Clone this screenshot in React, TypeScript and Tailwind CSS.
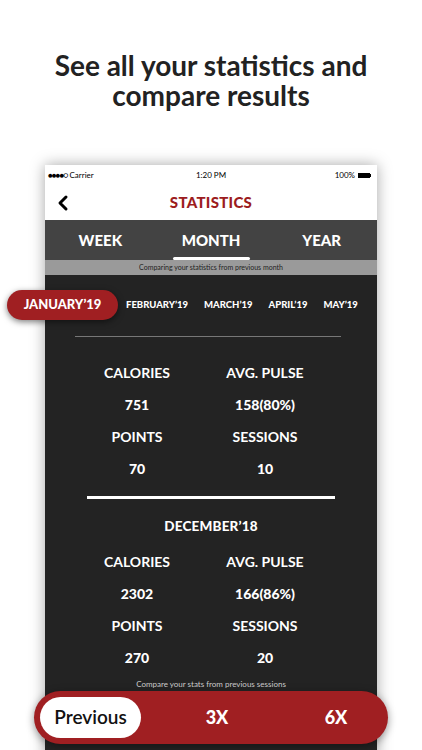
import { ChevronLeft } from 'lucide-react'

const months = ['FEBRUARY’19', 'MARCH’19', 'APRIL’19', 'MAY’19']

type Stat = { label: string; value: string }

function StatGrid({ stats }: { stats: Stat[][] }) {
  return (
    <div className="ml-[28px] grid w-[256px] grid-cols-2">
      {stats.map((row, i) => (
        <div key={i} className="contents">
          {row.map((s) => (
            <div key={s.label} className="flex flex-col items-center">
              <div className="flex h-[32px] items-center text-[14px] font-bold">{s.label}</div>
              <div className="flex h-[32px] items-center text-[14px] font-black">{s.value}</div>
            </div>
          ))}
        </div>
      ))}
    </div>
  )
}

export default function App() {
  return (
    <div className="relative h-[750px] w-full overflow-hidden bg-white font-['Lato',sans-serif]">
      <h1 className="pt-[50px] text-center text-[28px] leading-[30px] font-bold text-[#222]">
        <div>See all your statistics and</div>
        <div>compare results</div>
      </h1>

      <div className="mt-[55px] ml-[45px] h-[600px] w-[332px] bg-[#232323] shadow-[0_0_14px_rgba(0,0,0,0.35)]">
        {/* status bar */}
        <div className="flex h-[20px] items-center justify-between bg-white px-[3px] text-[8px] text-black">
          <span className="flex w-[80px] items-center gap-[2px]">
            <span className="tracking-[-1px]">●●●●○</span>
            <span>Carrier</span>
          </span>
          <span>1:20 PM</span>
          <span className="flex w-[80px] items-center justify-end gap-[3px] pr-[3px]">
            100%
            <span className="flex items-center">
              <span className="h-[5px] w-[12px] bg-black" />
              <span className="h-[3px] w-[1px] bg-black" />
            </span>
          </span>
        </div>

        {/* nav */}
        <div className="relative flex h-[35px] items-center justify-center bg-white">
          <ChevronLeft className="absolute left-[6px] top-[6px]" size={24} strokeWidth={3} color="#000" />
          <span className="text-[15px] font-black tracking-[0.3px] text-[#9c1c20]">STATISTICS</span>
        </div>

        {/* tabs */}
        <div className="flex h-[40px] bg-[#434343] text-[15px] font-black text-white">
          <div className="flex flex-1 items-center justify-center">WEEK</div>
          <div className="relative flex flex-1 items-center justify-center">
            MONTH
            <span className="absolute bottom-0 left-[17px] h-[3px] w-[77px] rounded-full bg-white" />
          </div>
          <div className="flex flex-1 items-center justify-center">YEAR</div>
        </div>
        <div className="flex h-[15px] items-center justify-center bg-[#9a9a9a] text-[7px] text-[#222]">
          Comparing your statistics from previous month
        </div>

        {/* months */}
        <div className="mt-[15px] flex h-[30px] items-center">
          <div className="-ml-[38px] flex h-[30px] w-[111px] shrink-0 items-center justify-center rounded-full bg-[#a01f22] text-[13px] font-black text-white shadow-[0_2px_6px_rgba(0,0,0,0.5)]">
            JANUARY’19
          </div>
          <div className="flex items-center gap-[16px] pl-[8px] text-[9.5px] font-black text-white">
            {months.map((m) => (
              <span key={m}>{m}</span>
            ))}
          </div>
        </div>

        <div className="mt-[16px] ml-[30px] h-px w-[266px] bg-[#777]" />

        <div className="mt-[19px] text-white">
          <StatGrid
            stats={[
              [
                { label: 'CALORIES', value: '751' },
                { label: 'AVG. PULSE', value: '158(80%)' },
              ],
              [
                { label: 'POINTS', value: '70' },
                { label: 'SESSIONS', value: '10' },
              ],
            ]}
          />
        </div>

        <div className="mt-[12px] ml-[42px] h-[3px] w-[248px] bg-white" />

        <div className="mt-[17px] text-center text-[13.5px] font-black tracking-[0.2px] text-white">DECEMBER’18</div>

        <div className="mt-[9px] text-white">
          <StatGrid
            stats={[
              [
                { label: 'CALORIES', value: '2302' },
                { label: 'AVG. PULSE', value: '166(86%)' },
              ],
              [
                { label: 'POINTS', value: '270' },
                { label: 'SESSIONS', value: '20' },
              ],
            ]}
          />
        </div>

        <div className="mt-[5px] text-center text-[8px] text-[#ccc]">Compare your stats from previous sessions</div>
      </div>

      {/* bottom switcher */}
      <div className="absolute top-[691px] left-[34px] flex h-[53px] w-[354px] items-center rounded-full bg-[#a01f22] px-[6px] shadow-[0_2px_8px_rgba(0,0,0,0.4)]">
        <div className="flex h-[41px] w-[101px] shrink-0 items-center justify-center rounded-full bg-white text-[19px] font-semibold text-[#111]">
          Previous
        </div>
        <div className="flex items-center text-[18px] font-black text-white">
          <span className="ml-[36px] w-[80px] shrink-0 text-center">3X</span>
          <span className="ml-[39px] w-[80px] shrink-0 text-center">6X</span>
        </div>
      </div>
    </div>
  )
}
